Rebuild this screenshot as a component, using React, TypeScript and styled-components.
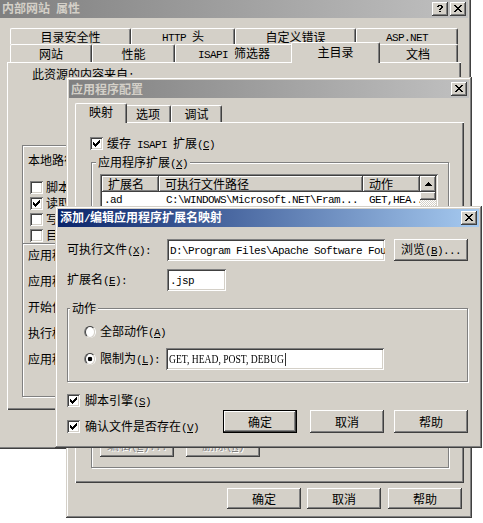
import React from 'react';
import styled, { createGlobalStyle, css } from 'styled-components';

const FACE = '#d4d0c8';

const Global = createGlobalStyle`
  html, body { margin: 0; padding: 0; background: #fff; }
  body {
    font-family: "Noto Sans CJK SC", "Liberation Sans", sans-serif;
    font-size: 12px;
    line-height: 14px;
    color: #000;
  }
  * { box-sizing: border-box; }
`;

const raised = css`
  box-shadow: inset -1px -1px #404040, inset 1px 1px #fff, inset -2px -2px #808080, inset 2px 2px ${FACE};
`;
const sunken = css`
  box-shadow: inset 1px 1px #808080, inset -1px -1px #fff, inset 2px 2px #404040, inset -2px -2px ${FACE};
`;

const Desktop = styled.div`
  position: relative;
  width: 483px;
  height: 523px;
  overflow: hidden;
  background: #fff;
`;

const Win = styled.div<{ $x: number; $y: number; $w: number; $h: number }>`
  position: absolute;
  left: ${p => p.$x}px;
  top: ${p => p.$y}px;
  width: ${p => p.$w}px;
  height: ${p => p.$h}px;
  padding: 3px;
  background: ${FACE};
  box-shadow: inset -1px -1px #404040, inset 1px 1px ${FACE}, inset -2px -2px #808080, inset 2px 2px #fff;
  display: flex;
  flex-direction: column;
`;

const TitleBar = styled.div<{ $active?: boolean }>`
  flex: none;
  height: 18px;
  display: flex;
  align-items: center;
  gap: 2px;
  padding: 0 2px 0 2px;
  background: linear-gradient(to right, ${p => (p.$active ? '#0a246a, #a6caf0' : '#808080, #c0c0c0')});
  color: ${p => (p.$active ? '#fff' : FACE)};
  font-weight: bold;
`;

const TitleText = styled.div`
  flex: 1;
  white-space: nowrap;
  overflow: hidden;
`;

const CapBtn = styled.div`
  flex: none;
  width: 16px;
  height: 14px;
  background: ${FACE};
  ${raised}
  display: flex;
  align-items: center;
  justify-content: center;
  padding: 0 1px 1px 0;
`;

const Body = styled.div<{ $p: string }>`
  flex: 1;
  min-height: 0;
  display: flex;
  flex-direction: column;
  padding: ${p => p.$p};
`;

const TabRow = styled.div<{ $h: number; $indent: number }>`
  flex: none;
  position: relative;
  z-index: 1;
  display: flex;
  align-items: flex-end;
  height: ${p => p.$h}px;
  margin-left: ${p => p.$indent}px;
`;

const Tab = styled.div<{ $w: number; $h: number; $sel?: boolean }>`
  flex: none;
  position: relative;
  z-index: ${p => (p.$sel ? 3 : 1)};
  width: ${p => (p.$sel ? p.$w + 4 : p.$w)}px;
  height: ${p => (p.$sel ? p.$h + 3 : p.$h)}px;
  margin: ${p => (p.$sel ? '0 -2px -1px -2px' : '0')};
  padding-bottom: ${p => (p.$sel ? 3 : 0)}px;
  background: ${FACE};
  border-top: 1px solid #fff;
  border-left: 1px solid #fff;
  border-right: 1px solid #404040;
  border-radius: 2px 2px 0 0;
  box-shadow: inset -1px 0 #808080;
  display: flex;
  align-items: center;
  justify-content: center;
  white-space: nowrap;
`;

const Panel = styled.div<{ $p?: string }>`
  flex: 1;
  min-height: 0;
  display: flex;
  flex-direction: column;
  padding: ${p => p.$p ?? '0'};
  background: ${FACE};
  box-shadow: inset 1px 1px #fff, inset -1px -1px #404040, inset -2px -2px #808080;
`;

const Txt = styled.span`
  white-space: pre;
`;

const Lat = styled.span`
  font-family: "Liberation Mono", monospace;
  font-size: 11px;
  letter-spacing: -0.6px;
`;

const Acc = styled.span`
  text-decoration: underline;
  text-underline-offset: 1px;
`;

const Restrict = styled.span`
  display: inline-block;
  font-family: "Liberation Serif", serif;
  font-size: 12px;
  letter-spacing: 0;
  transform: scaleX(0.8);
  transform-origin: 0 50%;
  white-space: pre;
`;

const Caret = styled.span`
  display: inline-block;
  width: 1.3px;
  height: 13px;
  margin-left: 1px;
  background: #000;
  vertical-align: middle;
`;

function acc(t: string): React.ReactNode {
  const i = t.indexOf('&');
  if (i < 0) return t;
  return (
    <>
      {t.slice(0, i)}
      <Acc>{t[i + 1]}</Acc>
      {t.slice(i + 2)}
    </>
  );
}

function T({ s }: { s: string }) {
  const out: React.ReactNode[] = [];
  const re = /[\x20-\x7e]+/g;
  let last = 0;
  let k = 0;
  let m: RegExpExecArray | null;
  while ((m = re.exec(s))) {
    if (m.index > last) out.push(<React.Fragment key={k++}>{s.slice(last, m.index)}</React.Fragment>);
    out.push(<Lat key={k++}>{acc(m[0])}</Lat>);
    last = m.index + m[0].length;
  }
  if (last < s.length) out.push(<React.Fragment key={k++}>{s.slice(last)}</React.Fragment>);
  return <Txt>{out}</Txt>;
}

function Pix({ rows, color = '#000' }: { rows: string[]; color?: string }) {
  return (
    <svg width={rows[0].length} height={rows.length} shapeRendering="crispEdges" style={{ display: 'block' }}>
      {rows.flatMap((r, y) =>
        r.split('').map((c, x) =>
          c === '1' ? <rect key={`${x}-${y}`} x={x} y={y} width={1} height={1} fill={color} /> : null
        )
      )}
    </svg>
  );
}

const X_ROWS = ['11000011', '01100110', '00111100', '00011000', '00111100', '01100110', '11000011'];
const HELP_ROWS = ['011110', '110011', '000011', '000110', '001100', '000000', '001100'];
const CHECK_ROWS = ['0000001', '0000011', '1000111', '1101110', '1111100', '0111000', '0010000'];
const UP_ROWS = ['0001000', '0011100', '0111110', '1111111'];

const CheckBox = styled.span`
  flex: none;
  width: 13px;
  height: 13px;
  background: #fff;
  ${sunken}
  display: flex;
  align-items: center;
  justify-content: center;
`;

function Check({ on }: { on?: boolean }) {
  return <CheckBox>{on && <Pix rows={CHECK_ROWS} />}</CheckBox>;
}

const CheckRow = styled.div<{ $gap?: number }>`
  flex: none;
  display: flex;
  align-items: center;
  gap: ${p => p.$gap ?? 4}px;
  height: 13px;
  white-space: nowrap;
`;

const Radio = styled.span<{ $on?: boolean }>`
  flex: none;
  width: 12px;
  height: 12px;
  border-radius: 50%;
  border: 1px solid;
  border-color: #808080 #fff #fff #808080;
  display: flex;
  align-items: center;
  justify-content: center;
  &::before {
    content: '';
    display: block;
    width: 10px;
    height: 10px;
    border-radius: 50%;
    border: 1px solid;
    border-color: #404040 ${FACE} ${FACE} #404040;
    background: ${p => (p.$on ? 'radial-gradient(circle, #000 0 2px, #fff 2.6px)' : '#fff')};
  }
`;

const RadioOpt = styled.div`
  flex: none;
  width: 82px;
  display: flex;
  align-items: center;
  gap: 4px;
  white-space: nowrap;
`;

const Btn = styled.div<{ $w: number; $h: number; $def?: boolean; $ml?: number; $dis?: boolean }>`
  flex: none;
  width: ${p => p.$w}px;
  height: ${p => p.$h}px;
  margin-left: ${p => p.$ml ?? 0}px;
  background: ${FACE};
  border: ${p => (p.$def ? '1px solid #000' : 'none')};
  ${raised}
  display: flex;
  align-items: center;
  justify-content: center;
  white-space: nowrap;
  color: ${p => (p.$dis ? '#808080' : '#000')};
  text-shadow: ${p => (p.$dis ? '1px 1px #fff' : 'none')};
`;

const BtnRow = styled.div<{ $mt: number; $pr: number }>`
  flex: none;
  display: flex;
  justify-content: flex-end;
  margin-top: ${p => p.$mt}px;
  padding-right: ${p => p.$pr}px;
`;

const Group = styled.div<{ $m?: string; $p: string; $h?: number }>`
  position: relative;
  margin: ${p => p.$m ?? '0'};
  padding: ${p => p.$p};
  ${p => (p.$h ? `height: ${p.$h}px; flex: none;` : 'flex: 1; min-height: 0;')}
  border: 1px solid #808080;
  box-shadow: inset 1px 1px #fff, 1px 1px #fff;
  display: flex;
  flex-direction: column;
`;

const GroupCaption = styled.span<{ $left: number }>`
  position: absolute;
  top: -8px;
  left: ${p => p.$left}px;
  padding: 0 2px;
  background: ${FACE};
  white-space: nowrap;
`;

/* ---------- window 1 ---------- */

const Intro = styled.div`
  flex: none;
  height: 14px;
  margin: 5px 0 0 25px;
  white-space: nowrap;
`;

const Frame = styled.div`
  flex: none;
  height: 252px;
  margin: 64px 15px 0 15px;
  padding: 7px 0 0 5px;
  border: 1px solid #808080;
  box-shadow: inset 1px 1px #fff, 1px 1px #fff;
  display: flex;
  flex-direction: column;
`;

const FrameLine = styled.div`
  flex: none;
  height: 14px;
  white-space: nowrap;
`;

const FrameChecks = styled.div`
  display: flex;
  flex-direction: column;
  gap: 3px;
  margin: 14px 0 0 2px;
`;

const Separator = styled.div`
  flex: none;
  height: 2px;
  margin: 1px 0 0 -5px;
  border-top: 1px solid #808080;
  border-bottom: 1px solid #fff;
`;

const FrameLabels = styled.div`
  display: flex;
  flex-direction: column;
  gap: 12px;
  margin-top: 3px;
`;

/* ---------- window 2 ---------- */

const ListBox = styled.div`
  flex: 1;
  min-height: 0;
  display: flex;
  padding: 2px;
  background: #fff;
  ${sunken}
  overflow: hidden;
`;

const ListMain = styled.div`
  flex: 1;
  min-width: 0;
  display: flex;
  flex-direction: column;
`;

const HeaderRow = styled.div`
  flex: none;
  display: flex;
  height: 16px;
`;

const HeaderCell = styled.div<{ $w: number }>`
  flex: none;
  width: ${p => p.$w}px;
  padding-left: 6px;
  background: ${FACE};
  box-shadow: inset -1px -1px #404040, inset 1px 1px #fff, inset -2px -2px #808080;
  display: flex;
  align-items: center;
  white-space: nowrap;
  overflow: hidden;
`;

const ListRow = styled.div`
  flex: none;
  display: flex;
  height: 14px;
  align-items: center;
`;

const ListCell = styled.div<{ $w: number; $pl: number }>`
  flex: none;
  width: ${p => p.$w}px;
  padding-left: ${p => p.$pl}px;
  white-space: nowrap;
  overflow: hidden;
`;

const ScrollCol = styled.div`
  flex: none;
  width: 16px;
  display: flex;
  flex-direction: column;
  background: repeating-conic-gradient(#fff 0 25%, ${FACE} 0 50%) 0 0 / 2px 2px;
`;

const ScrollBtn = styled.div`
  flex: none;
  width: 16px;
  height: 16px;
  background: ${FACE};
  ${raised}
  display: flex;
  align-items: center;
  justify-content: center;
  padding-bottom: 1px;
`;

const Thumb = styled.div`
  flex: none;
  width: 16px;
  height: 8px;
  background: ${FACE};
  ${raised}
`;

const GroupBtns = styled.div`
  flex: none;
  display: flex;
  margin-top: 6px;
`;

/* ---------- window 3 ---------- */

const FormRow = styled.div<{ $mt?: number }>`
  flex: none;
  display: flex;
  align-items: center;
  height: 22px;
  margin-top: ${p => p.$mt ?? 0}px;
`;

const FieldLabel = styled.div<{ $w: number }>`
  flex: none;
  width: ${p => p.$w}px;
  white-space: nowrap;
`;

const TextField = styled.div<{ $w: number }>`
  flex: none;
  width: ${p => p.$w}px;
  height: 22px;
  padding: 0 3px;
  background: #fff;
  ${sunken}
  display: flex;
  align-items: center;
  white-space: nowrap;
  overflow: hidden;
`;

const RadioList = styled.div`
  display: flex;
  flex-direction: column;
  gap: 5px;
`;

const BottomRow = styled.div`
  flex: none;
  display: flex;
  align-items: flex-end;
  margin-top: 12px;
`;

const CheckCol = styled.div`
  flex: 1;
  display: flex;
  flex-direction: column;
  gap: 13px;
`;

export default function App() {
  return (
    <>
      <Global />
      <Desktop>
        {/* 内部网站 属性 */}
        <Win $x={-3} $y={-3} $w={474} $h={452}>
          <TitleBar>
            <TitleText><T s="内部网站 属性" /></TitleText>
            <CapBtn><Pix rows={HELP_ROWS} /></CapBtn>
            <CapBtn><Pix rows={X_ROWS} /></CapBtn>
          </TitleBar>
          <Body $p="10px 7px 7px 7px">
            <TabRow $h={16} $indent={3}>
              <Tab $w={121} $h={16}>目录安全性</Tab>
              <Tab $w={104} $h={16}><T s="HTTP 头" /></Tab>
              <Tab $w={121} $h={16}>自定义错误</Tab>
              <Tab $w={102} $h={16}><T s="ASP.NET" /></Tab>
            </TabRow>
            <TabRow $h={18} $indent={3}>
              <Tab $w={82} $h={18}>网站</Tab>
              <Tab $w={83} $h={18}>性能</Tab>
              <Tab $w={118} $h={18}><T s="ISAPI 筛选器" /></Tab>
              <Tab $w={85} $h={18} $sel>主目录</Tab>
              <Tab $w={80} $h={18}>文档</Tab>
            </TabRow>
            <Panel>
              <Intro><T s="此资源的内容来自:" /></Intro>
              <Frame>
                <FrameLine><T s="本地路径(&C):" /></FrameLine>
                <FrameChecks>
                  <CheckRow $gap={3}><Check /><T s="脚本资源访问(&T)" /></CheckRow>
                  <CheckRow $gap={3}><Check on /><T s="读取(&R)" /></CheckRow>
                  <CheckRow $gap={3}><Check /><T s="写入(&W)" /></CheckRow>
                  <CheckRow $gap={3}><Check /><T s="目录浏览(&B)" /></CheckRow>
                </FrameChecks>
                <Separator />
                <FrameLabels>
                  <FrameLine>应用程序设置</FrameLine>
                  <FrameLine><T s="应用程序名(&M):" /></FrameLine>
                  <FrameLine><T s="开始位置:" /></FrameLine>
                  <FrameLine><T s="执行权限(&P):" /></FrameLine>
                  <FrameLine><T s="应用程序池(&N):" /></FrameLine>
                </FrameLabels>
              </Frame>
            </Panel>
            <BtnRow $mt={6} $pr={0}>
              <Btn $w={75} $h={23}>确定</Btn>
              <Btn $w={75} $h={23} $ml={6}>取消</Btn>
              <Btn $w={75} $h={23} $ml={6}><T s="应用(&A)" /></Btn>
              <Btn $w={75} $h={23} $ml={6}>帮助</Btn>
            </BtnRow>
          </Body>
        </Win>

        {/* 应用程序配置 */}
        <Win $x={66} $y={77} $w={406} $h={441}>
          <TitleBar>
            <TitleText>应用程序配置</TitleText>
            <CapBtn><Pix rows={X_ROWS} /></CapBtn>
          </TitleBar>
          <Body $p="7px 5px 6px 6px">
            <TabRow $h={17} $indent={2}>
              <Tab $w={48} $h={17} $sel>映射</Tab>
              <Tab $w={46} $h={17}>选项</Tab>
              <Tab $w={51} $h={17}>调试</Tab>
            </TabRow>
            <Panel $p="15px 15px 15px 15px">
              <CheckRow>
                <Check on />
                <T s="缓存 ISAPI 扩展(&C)" />
              </CheckRow>
              <Group $m="12px 0 0 1px" $p="11px 10px 10px 8px">
                <GroupCaption $left={4}><T s="应用程序扩展(&X)" /></GroupCaption>
                <ListBox>
                  <ListMain>
                    <HeaderRow>
                      <HeaderCell $w={57}>扩展名</HeaderCell>
                      <HeaderCell $w={204}>可执行文件路径</HeaderCell>
                      <HeaderCell $w={57}>动作</HeaderCell>
                    </HeaderRow>
                    <ListRow>
                      <ListCell $w={57} $pl={2}><T s=".ad" /></ListCell>
                      <ListCell $w={204} $pl={7}><T s="C:\WINDOWS\Microsoft.NET\Fram..." /></ListCell>
                      <ListCell $w={57} $pl={6}><T s="GET,HEA..." /></ListCell>
                    </ListRow>
                    <ListRow>
                      <ListCell $w={57} $pl={2}><T s=".adprototype" /></ListCell>
                      <ListCell $w={204} $pl={7}><T s="C:\WINDOWS\Microsoft.NET\Fram..." /></ListCell>
                      <ListCell $w={57} $pl={6}><T s="GET,HEA..." /></ListCell>
                    </ListRow>
                  </ListMain>
                  <ScrollCol>
                    <ScrollBtn><Pix rows={UP_ROWS} /></ScrollBtn>
                    <Thumb />
                  </ScrollCol>
                </ListBox>
                <GroupBtns>
                  <Btn $w={74} $h={23} $dis><T s="编辑(&E)..." /></Btn>
                  <Btn $w={74} $h={23} $ml={12} $dis><T s="删除(&R)" /></Btn>
                </GroupBtns>
              </Group>
            </Panel>
            <BtnRow $mt={5} $pr={2}>
              <Btn $w={74} $h={21}>确定</Btn>
              <Btn $w={74} $h={21} $ml={6}>取消</Btn>
              <Btn $w={74} $h={21} $ml={7}>帮助</Btn>
            </BtnRow>
          </Body>
        </Win>

        {/* 添加/编辑应用程序扩展名映射 */}
        <Win $x={55} $y={206} $w={427} $h={242}>
          <TitleBar $active>
            <TitleText><T s="添加/编辑应用程序扩展名映射" /></TitleText>
            <CapBtn><Pix rows={X_ROWS} /></CapBtn>
          </TitleBar>
          <Body $p="12px 11px 12px 9px">
            <FormRow>
              <FieldLabel $w={100}><T s="可执行文件(&X):" /></FieldLabel>
              <TextField $w={218}><T s="D:\Program Files\Apache Software Foundation" /></TextField>
              <Btn $w={74} $h={22} $ml={9}><T s="浏览(&B)..." /></Btn>
            </FormRow>
            <FormRow $mt={8}>
              <FieldLabel $w={100}><T s="扩展名(&E):" /></FieldLabel>
              <TextField $w={59}><T s=".jsp" /></TextField>
            </FormRow>
            <Group $m="17px 0 0 0" $p="12px 0 0 16px" $h={74}>
              <GroupCaption $left={2}>动作</GroupCaption>
              <RadioList>
                <FormRow>
                  <RadioOpt><Radio /><T s="全部动作(&A)" /></RadioOpt>
                </FormRow>
                <FormRow>
                  <RadioOpt><Radio $on /><T s="限制为(&L):" /></RadioOpt>
                  <TextField $w={218}>
                    <Restrict>GET, HEAD, POST, DEBUG<Caret /></Restrict>
                  </TextField>
                </FormRow>
              </RadioList>
            </Group>
            <BottomRow>
              <CheckCol>
                <CheckRow $gap={5}><Check on /><T s="脚本引擎(&S)" /></CheckRow>
                <CheckRow $gap={5}><Check on /><T s="确认文件是否存在(&V)" /></CheckRow>
              </CheckCol>
              <Btn $w={74} $h={23} $def>确定</Btn>
              <Btn $w={74} $h={23} $ml={13}>取消</Btn>
              <Btn $w={74} $h={23} $ml={10}>帮助</Btn>
            </BottomRow>
          </Body>
        </Win>
      </Desktop>
    </>
  );
}
